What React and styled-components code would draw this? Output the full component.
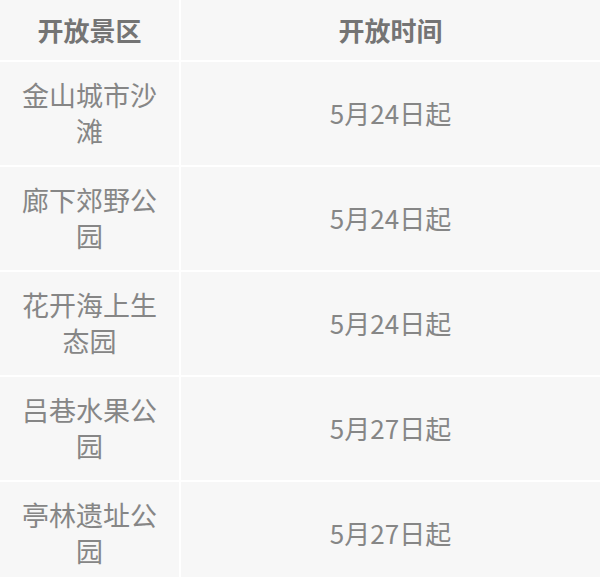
import React from 'react'
import styled, { createGlobalStyle } from 'styled-components'

const GlobalStyle = createGlobalStyle`
  html, body {
    margin: 0;
    padding: 0;
    background: #ffffff;
  }
  body {
    font-family: "Noto Sans CJK SC", "Noto Sans", sans-serif;
  }
`

const rows = [
  { place: '金山城市沙滩', date: '5月24日起' },
  { place: '廊下郊野公园', date: '5月24日起' },
  { place: '花开海上生态园', date: '5月24日起' },
  { place: '吕巷水果公园', date: '5月27日起' },
  { place: '亭林遗址公园', date: '5月27日起' },
]

const Table = styled.div`
  display: grid;
  grid-template-columns: 179px 1fr;
  grid-template-rows: 60px;
  grid-auto-rows: 103px;
  gap: 2px;
  width: 600px;
  height: 577px;
  overflow: hidden;
  background: #ffffff;
`

const HeadCell = styled.div`
  display: flex;
  align-items: center;
  justify-content: center;
  padding-bottom: 2px;
  background: #f7f7f7;
  color: #747474;
  font-size: 26px;
  font-weight: 700;
`

const Cell = styled.div`
  display: flex;
  align-items: center;
  justify-content: center;
  padding: 0 ${p => (p.$wrap ? '19px' : '0')} 2px;
  background: #f7f7f7;
  color: #868686;
  font-size: ${p => (p.$wrap ? '27px' : '26px')};
  line-height: 36px;
  text-align: center;
  word-break: break-all;
`

export default function App() {
  return (
    <>
      <GlobalStyle />
      <Table>
        <HeadCell>开放景区</HeadCell>
        <HeadCell>开放时间</HeadCell>
        {rows.map(row => (
          <React.Fragment key={row.place}>
            <Cell $wrap>{row.place}</Cell>
            <Cell>{row.date}</Cell>
          </React.Fragment>
        ))}
      </Table>
    </>
  )
}
